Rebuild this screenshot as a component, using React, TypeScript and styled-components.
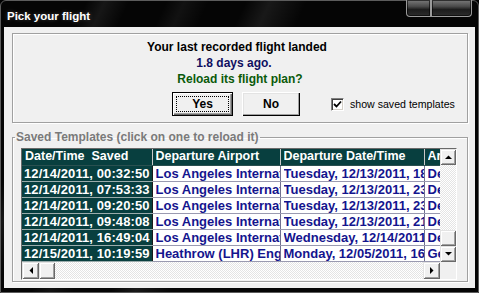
import React from 'react';
import styled, { createGlobalStyle } from 'styled-components';

const GlobalStyle = createGlobalStyle`
  html, body { margin: 0; padding: 0; background: #000; }
  body { width: 479px; height: 293px; overflow: hidden; font-family: "Liberation Sans", Arial, sans-serif; }
  * { box-sizing: border-box; }
`;

const Window = styled.div`
  width: 479px;
  height: 293px;
  display: flex;
  flex-direction: column;
  border: 1px solid #5c5c5c;
  border-radius: 6px 6px 0 0;
  padding: 0 3px 4px 3px;
  background:
    linear-gradient(115deg, transparent 0 14%, rgba(255,255,255,0.07) 17%, transparent 21%,
      transparent 27%, rgba(255,255,255,0.05) 30%, transparent 34%,
      transparent 40%, rgba(255,255,255,0.08) 44%, transparent 50%, transparent 100%),
    #050505;
`;

const TitleBar = styled.div`
  height: 26px;
  display: flex;
  align-items: flex-start;
`;

const TitleText = styled.div`
  margin: 8px 0 0 3px;
  color: #fff;
  font-weight: bold;
  font-size: 11.5px;
  line-height: 14px;
  text-shadow: 0 0 4px rgba(255,255,255,0.25);
`;

const CaptionButtons = styled.div`
  margin-left: auto;
  margin-right: 3px;
  display: flex;
  height: 17px;
  margin-top: -1px;
`;

const CaptionButton = styled.div<{ $w: number; $first?: boolean; $last?: boolean }>`
  width: ${p => p.$w}px;
  height: 17px;
  border: 1px solid #9a9a9a;
  border-top: none;
  border-left-width: ${p => (p.$first ? 1 : 0)}px;
  border-radius: ${p => (p.$first ? '0 0 0 4px' : p.$last ? '0 0 4px 0' : '0')};
  background: linear-gradient(#7a7a7a, #4a4a4a 40%, #1c1c1c 60%, #2c2c2c);
  box-shadow: inset 0 0 0 1px rgba(0,0,0,0.6);
  & + & { border-left: 1px solid #9a9a9a; }
`;

const Client = styled.div`
  flex: 1;
  background: #f0f0f0;
  display: flex;
  flex-direction: column;
  padding: 6px 7px 5px 8px;
`;

const TopGroup = styled.div`
  border: 1px solid #a0a0a0;
  box-shadow: inset 1px 1px 0 #fff, 1px 1px 0 #fff;
  padding: 5px 0 6px 0;
  display: flex;
  flex-direction: column;
`;

const Line = styled.div<{ $color: string; $dx?: number }>`
  font-weight: bold;
  font-size: 12px;
  line-height: 16px;
  text-align: center;
  color: ${p => p.$color};
  padding-right: 6px;
  margin-left: ${p => p.$dx ?? 0}px;
`;

const ButtonRow = styled.div`
  display: flex;
  align-items: center;
  margin-top: 5px;
  padding-left: 159px;
  gap: 9px;
`;

const PushButton = styled.button<{ $w: number; $default?: boolean }>`
  position: relative;
  width: ${p => p.$w}px;
  height: 24px;
  margin: 0;
  padding: 0;
  font-family: "Liberation Sans", Arial, sans-serif;
  font-weight: bold;
  font-size: 12px;
  color: #000;
  background: #f0f0f0;
  border: ${p => (p.$default ? '1px solid #000' : 'none')};
  box-shadow: ${p =>
    p.$default
      ? 'inset 1px 1px 0 #fff, inset -1px -1px 0 #696969, inset -2px -2px 0 #a0a0a0'
      : 'inset 1px 1px 0 #fff, inset -1px -1px 0 #000, inset -2px -2px 0 #a0a0a0, inset 2px 2px 0 #e3e3e3'};
  &::after {
    content: '';
    display: ${p => (p.$default ? 'block' : 'none')};
    position: absolute;
    inset: 3px 3px 3px 3px;
    border: 1px dotted #000;
  }
`;

const CheckLabel = styled.label`
  display: flex;
  align-items: center;
  margin-left: 22px;
  gap: 6px;
  font-size: 10.6px;
  color: #000;
`;

const CheckBox = styled.span`
  width: 13px;
  height: 13px;
  display: flex;
  align-items: center;
  justify-content: center;
  background: #fff;
  border: 1px solid;
  border-color: #808080 #fff #fff #808080;
  box-shadow: inset 1px 1px 0 #404040, inset -1px -1px 0 #d4d0c8;
`;

const Fieldset = styled.fieldset`
  margin: 6px 0 0 0;
  padding: 3px 10px 1px 2px;
  border: 1px solid #a0a0a0;
  box-shadow: inset 1px 1px 0 #fff, 1px 1px 0 #fff;
  min-width: 0;
`;

const Legend = styled.legend`
  padding: 0 1px;
  font-size: 12px;
  font-weight: bold;
  line-height: 16px;
  color: #7a7a7a;
`;

const GridFrame = styled.div`
  margin-left: 6px;
  display: grid;
  grid-template-columns: 418px 16px;
  grid-template-rows: 113px 17px;
  border: 1px solid;
  border-color: #696969 #fff #fff #696969;
`;

const Viewport = styled.div`
  overflow: hidden;
  background: #fff;
`;

const Table = styled.table`
  border-collapse: collapse;
  table-layout: fixed;
  width: 522px;
  font-family: "Liberation Sans", Arial, sans-serif;
  font-weight: bold;
  font-size: 13px;
`;

const Clip = styled.div`
  overflow: hidden;
  white-space: nowrap;
`;

const HeadCell = styled.th`
  height: 16px;
  padding: 0 0 0 3px;
  text-align: left;
  background: #083f3f;
  color: #fff;
  font-size: 12.5px;
  line-height: 15px;
  border-right: 1px solid #c8c8c8;
  border-bottom: 1px solid #2a5050;
`;

const FixedCell = styled.td`
  height: 16px;
  padding: 0 0 0 2px;
  background: #083f3f;
  color: #fff;
  line-height: 15px;
  letter-spacing: 0.1px;
  border-right: 1px solid #1a1a1a;
  border-bottom: 1px solid #9aabab;
`;

const DataCell = styled.td`
  height: 16px;
  padding: 0 0 0 3px;
  color: #14148e;
  line-height: 15px;
  border-right: 1px solid #707090;
  border-bottom: 1px solid #9a9ab0;
`;

const VScroll = styled.div`
  display: flex;
  flex-direction: column;
  background: repeating-conic-gradient(#fff 0 25%, #e4e4e4 0 50%) 0 0 / 2px 2px;
`;

const HScroll = styled.div`
  display: flex;
  background: repeating-conic-gradient(#fff 0 25%, #e4e4e4 0 50%) 0 0 / 2px 2px;
`;

const Track = styled.div`
  flex: 1;
`;

const ScrollBtn = styled.div<{ $w: number; $h: number }>`
  width: ${p => p.$w}px;
  height: ${p => p.$h}px;
  flex: none;
  display: flex;
  align-items: center;
  justify-content: center;
  background: #f0f0f0;
  box-shadow: inset 1px 1px 0 #e3e3e3, inset -1px -1px 0 #696969, inset 2px 2px 0 #fff, inset -2px -2px 0 #a0a0a0;
`;

const Corner = styled.div`
  background: #f0f0f0;
`;

type Dir = 'up' | 'down' | 'left' | 'right';
const Arrow = ({ dir }: { dir: Dir }) => {
  const pts: Record<Dir, string> = {
    up: '0,4 7,4 3.5,0.5',
    down: '0,0 7,0 3.5,3.5',
    left: '4,0 4,7 0.5,3.5',
    right: '0,0 0,7 3.5,3.5',
  };
  const vertical = dir === 'up' || dir === 'down';
  return (
    <svg width={vertical ? 7 : 4} height={vertical ? 4 : 7} viewBox={vertical ? '0 0 7 4' : '0 0 4 7'}>
      <polygon points={pts[dir]} fill="#000" />
    </svg>
  );
};

const headers = ['Date/Time\u00a0\u00a0Saved', 'Departure Airport', 'Departure Date/Time', 'Arrival Airport'];
const rows = [
  ['12/14/2011, 00:32:50', 'Los Angeles International (LAX)', 'Tuesday, 12/13/2011, 18:40', 'Denver International (DEN)'],
  ['12/14/2011, 07:53:33', 'Los Angeles International (LAX)', 'Tuesday, 12/13/2011, 23:10', 'Denver International (DEN)'],
  ['12/14/2011, 09:20:50', 'Los Angeles International (LAX)', 'Tuesday, 12/13/2011, 23:55', 'Denver International (DEN)'],
  ['12/14/2011, 09:48:08', 'Los Angeles International (LAX)', 'Tuesday, 12/13/2011, 21:20', 'Denver International (DEN)'],
  ['12/14/2011, 16:49:04', 'Los Angeles International (LAX)', 'Wednesday, 12/14/2011, 08:30', 'Denver International (DEN)'],
  ['12/15/2011, 10:19:59', 'Heathrow (LHR) England', 'Monday, 12/05/2011, 16:25', 'Geneva (GVA) Switzerland'],
];
const colWidths = [130, 128, 144, 120];

export default function App() {
  return (
    <>
      <GlobalStyle />
      <Window>
        <TitleBar>
          <TitleText>Pick your flight</TitleText>
          <CaptionButtons>
            <CaptionButton $w={25} $first />
            <CaptionButton $w={41} $last />
          </CaptionButtons>
        </TitleBar>
        <Client>
          <TopGroup>
            <Line $color="#000">Your last recorded flight landed</Line>
            <Line $color="#101060" $dx={-6}>1.8 days ago.</Line>
            <Line $color="#0a5a0a" $dx={6}>Reload its flight plan?</Line>
            <ButtonRow>
              <PushButton $w={61} $default>Yes</PushButton>
              <PushButton $w={58}>No</PushButton>
              <CheckLabel>
                <CheckBox>
                  <svg width="9" height="9" viewBox="0 0 9 9">
                    <polyline points="1,4 3.5,6.5 8,1.5" fill="none" stroke="#000" strokeWidth="1.8" />
                  </svg>
                </CheckBox>
                show saved templates
              </CheckLabel>
            </ButtonRow>
          </TopGroup>
          <Fieldset>
            <Legend>Saved Templates (click on one to reload it)</Legend>
            <GridFrame>
              <Viewport>
                <Table>
                  <colgroup>
                    {colWidths.map((w, i) => (
                      <col key={i} style={{ width: w }} />
                    ))}
                  </colgroup>
                  <thead>
                    <tr>
                      {headers.map(h => (
                        <HeadCell key={h}><Clip>{h}</Clip></HeadCell>
                      ))}
                    </tr>
                  </thead>
                  <tbody>
                    {rows.map(r => (
                      <tr key={r[0]}>
                        <FixedCell><Clip>{r[0]}</Clip></FixedCell>
                        <DataCell><Clip>{r[1]}</Clip></DataCell>
                        <DataCell><Clip>{r[2]}</Clip></DataCell>
                        <DataCell><Clip>{r[3]}</Clip></DataCell>
                      </tr>
                    ))}
                  </tbody>
                </Table>
              </Viewport>
              <VScroll>
                <ScrollBtn $w={16} $h={16}><Arrow dir="up" /></ScrollBtn>
                <Track />
                <ScrollBtn $w={16} $h={16} />
                <ScrollBtn $w={16} $h={16}><Arrow dir="down" /></ScrollBtn>
              </VScroll>
              <HScroll>
                <ScrollBtn $w={17} $h={17}><Arrow dir="left" /></ScrollBtn>
                <ScrollBtn $w={16} $h={17} />
                <Track />
                <ScrollBtn $w={17} $h={17}><Arrow dir="right" /></ScrollBtn>
              </HScroll>
              <Corner />
            </GridFrame>
          </Fieldset>
        </Client>
      </Window>
    </>
  );
}
